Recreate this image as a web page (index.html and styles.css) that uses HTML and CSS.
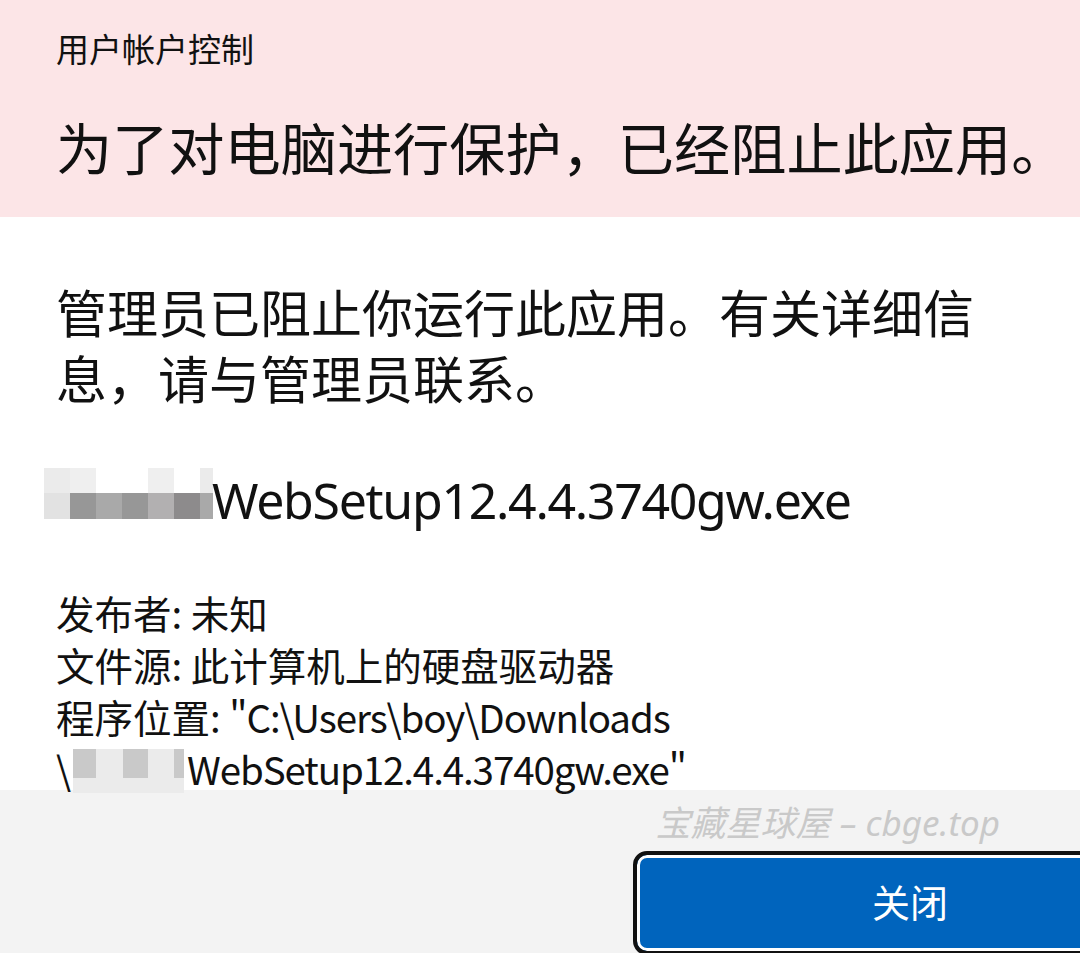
FILE: index.html
```html
<!DOCTYPE html>
<html lang="zh-CN">
<head>
<meta charset="utf-8">
<title>用户帐户控制</title>
<link rel="stylesheet" href="styles.css">
</head>
<body>
<div class="dialog">
  <header class="header">
    <div class="app-title">用户帐户控制</div>
    <h1 class="headline">为了对电脑进行保护，已经阻止此应用。</h1>
  </header>
  <main class="content">
    <p class="message">管理员已阻止你运行此应用。有关详细信息，请与管理员联系。</p>
    <div class="file-row">
      <div class="mosaic mosaic-big">
        <span class="c c1"></span><span class="c c2"></span><span class="c c0"></span><span class="c c0"></span><span class="c c2"></span><span class="c c0"></span><span class="c c1"></span>
        <span class="c c3"></span><span class="c c6"></span><span class="c c5"></span><span class="c c6"></span><span class="c c4"></span><span class="c c7"></span><span class="c c5"></span>
      </div>
      <span class="file-name">WebSetup12.4.4.3740gw.exe</span>
    </div>
    <div class="details">
      <div>发布者: 未知</div>
      <div>文件源: 此计算机上的硬盘驱动器</div>
      <div>程序位置: <span class="latin">"C:\Users\boy\Downloads</span><br><span class="latin">\</span><span class="mosaic mosaic-small"><span class="s s1"></span><span class="s s0"></span><span class="s s1"></span><span class="s s0"></span><span class="s s1"></span><span class="s s0"></span><span class="s s0"></span><span class="s s0"></span><span class="s s0"></span><span class="s s0"></span></span><span class="latin">WebSetup12.4.4.3740gw.exe"</span></div>
    </div>
  </main>
  <footer class="footer">
    <div class="watermark">宝藏星球屋 – cbge.top</div>
    <button class="close-btn">关闭</button>
  </footer>
</div>
</body>
</html>
```

FILE: styles.css
```css
html, body {
  margin: 0;
  padding: 0;
  width: 1080px;
  height: 953px;
  overflow: hidden;
  background: #ffffff;
}

.dialog {
  font-family: "Noto Sans", "Noto Sans CJK SC", sans-serif;
  color: #111111;
  height: 953px;
}

.header {
  background: #fce5e7;
  height: 217px;
  box-sizing: border-box;
  padding: 28px 0 0 56px;
}

.app-title {
  font-family: "Noto Sans CJK SC", sans-serif;
  font-size: 33px;
  line-height: 40px;
}

.headline {
  margin: 44px 0 0 0;
  font-family: "Noto Sans CJK SC", sans-serif;
  font-weight: 400;
  font-size: 56.2px;
  line-height: 67px;
  white-space: nowrap;
}

.content {
  height: 573px;
  box-sizing: border-box;
  padding: 61px 56px 0 56px;
}

.message {
  margin: 0;
  font-family: "Noto Sans CJK SC", sans-serif;
  font-size: 51px;
  line-height: 66px;
  max-width: 940px;
}

.file-row {
  display: flex;
  align-items: flex-end;
  margin-top: 58px;
  margin-left: -12px;
}

.file-name {
  font-family: "Noto Sans", sans-serif;
  font-size: 50px;
  line-height: 60px;
  letter-spacing: -1.3px;
  margin-left: -3px;
}

.mosaic-big {
  display: grid;
  grid-template-columns: 26px 26px 26px 26px 26px 26px 13px;
  grid-template-rows: 25px 26px;
  margin-bottom: 11px;
  margin-right: 2px;
}

.c { display: block; }
.c0 { background: #ffffff; }
.c1 { background: #ebebeb; }
.c2 { background: #efefef; }
.c3 { background: #e2e2e2; }
.c4 { background: #b2b0b1; }
.c5 { background: #a9a9a9; }
.c6 { background: #979797; }
.c7 { background: #8d8b8c; }

.details {
  margin-top: 56px;
  font-family: "Noto Sans CJK SC", sans-serif;
  font-size: 38.5px;
  line-height: 52px;
  white-space: nowrap;
}

.latin {
  letter-spacing: -1.1px;
}

.mosaic-small {
  display: inline-grid;
  grid-template-columns: 23px 27px 25px 26px 10px;
  grid-template-rows: 29px 15px;
  vertical-align: 7px;
  margin: 0 3px 0 3px;
  background: #ececec;
}

.s { display: block; }
.s0 { background: #ebebeb; }
.s1 { background: #c9c9c9; }

.footer {
  height: 163px;
  box-sizing: border-box;
  background: #f3f3f3;
  display: flex;
  flex-direction: column;
  align-items: flex-end;
  padding-top: 13px;
  overflow: hidden;
}

.watermark {
  margin-right: 80px;
  font-family: "Noto Sans", "Noto Sans CJK SC", sans-serif;
  font-style: italic;
  font-size: 35px;
  line-height: 40px;
  color: #c9c9c9;
}

.close-btn {
  margin-top: 8px;
  margin-right: -107px;
  width: 554px;
  height: 104px;
  flex-shrink: 0;
  box-sizing: border-box;
  border: 4px solid #111111;
  border-radius: 14px;
  background: #0064bd;
  box-shadow: inset 0 0 0 3px #ffffff;
  color: #ffffff;
  font-family: "Noto Sans CJK SC", sans-serif;
  font-size: 38px;
  padding: 0;
  padding-bottom: 6px;
}
```
